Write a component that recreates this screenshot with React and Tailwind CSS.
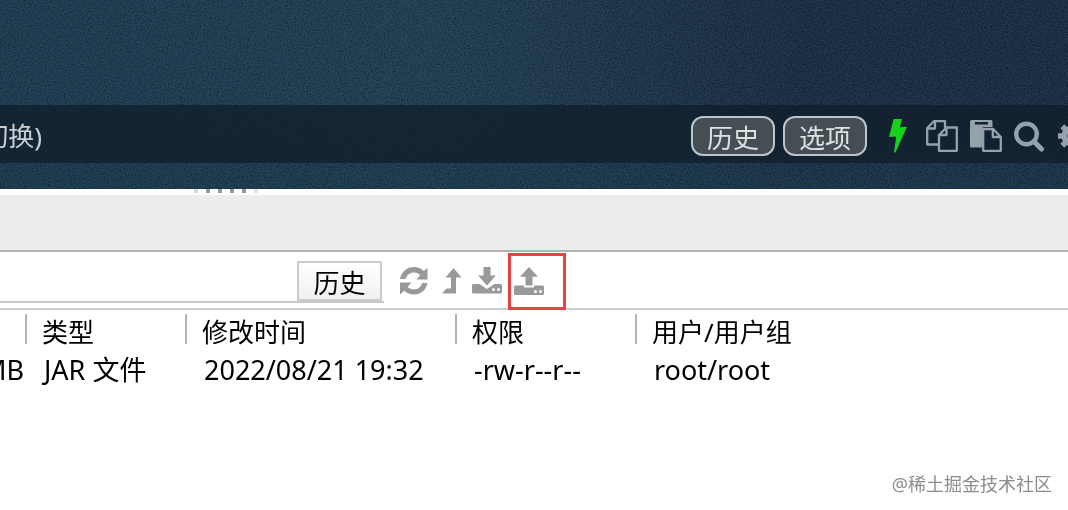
const columns = [
  { name: "类型", width: "w-[160px]" },
  { name: "修改时间", width: "w-[270px]" },
  { name: "权限", width: "w-[180px]" },
  { name: "用户/用户组", width: "" },
];

const files = [
  { size: "MB", type: "JAR 文件", modified: "2022/08/21 19:32", mode: "-rw-r--r--", owner: "root/root" },
];

const BoltIcon = () => (
  <svg width="18" height="34" viewBox="0 0 18 34" fill="#17d21c" aria-hidden="true">
    <path d="M4.700 0h8.300l-2 8.200 7-.4L6.500 33.500H5l2.200-16L0 18z" />
  </svg>
);

const CopyIcon = () => (
  <svg width="32" height="32" viewBox="0 0 32 32" fill="none" stroke="#95a1ab" strokeWidth="2.300" strokeLinejoin="round" aria-hidden="true">
    <path d="M12 24.500H1.200V8l7-7H19v7M9 1v7.500H1" />
    <path d="M20.500 7.500h10.300v23.300H13V15zM20.500 7.500V15H13" />
  </svg>
);

const PasteIcon = () => (
  <svg width="32" height="32" viewBox="0 0 32 32" aria-hidden="true">
    <path fill="#95a1ab" fillRule="evenodd" d="M1.500 0h19.500a1.500 1.500 0 0 1 1.500 1.500V7H14a2 2 0 0 0-2 2v18.500H1.500A1.500 1.500 0 0 1 0 26V1.500A1.500 1.500 0 0 1 1.500 0zM5 2v2.500h13V2z" />
    <path fill="none" stroke="#95a1ab" strokeWidth="2.300" strokeLinejoin="round" d="M13.200 9h10l7.600 8v13.800H13.200zM22.800 9v8h8" />
  </svg>
);

const SearchIcon = () => (
  <svg width="32" height="32" viewBox="0 0 32 32" fill="none" stroke="#95a1ab" strokeLinecap="round" aria-hidden="true">
    <circle cx="12.500" cy="14" r="10.300" strokeWidth="4.400" />
    <path strokeWidth="5" d="M20.500 22l7 7" />
  </svg>
);

const CogIcon = () => (
  <svg width="28" height="28" viewBox="0 0 28 28" aria-hidden="true">
    <circle cx="14" cy="14" r="7.500" fill="none" stroke="#95a1ab" strokeWidth="6" />
    <g stroke="#95a1ab" strokeWidth="5.500">
      <path d="M14 0v5M14 23v5M0 14h5M23 14h5M4.300 4.300l3.500 3.500M20.200 20.200l3.500 3.500M4.300 23.700l3.500-3.500M20.200 7.800l3.500-3.500" />
    </g>
  </svg>
);

const RefreshIcon = () => (
  <svg width="28" height="28" viewBox="0 0 28 28" fill="#999" aria-hidden="true">
    <path d="M0 12C1.500 4.500 7 0 14 0c4 0 7.200 1.400 9.800 4L27.500 1v11.500H16.500L20.300 8C18.500 6.300 16.500 5.500 14 5.500c-4 0-7 2.200-8.500 6.500z" />
    <path d="M27.500 16C26 23.500 20.500 27.500 14 27.500c-4 0-7.200-1.200-9.800-3.700L0 27.500V15.500h11.500L7.500 20c1.800 1.600 4 2.400 6.500 2.400 4 0 7-2.200 8.200-6.400z" />
  </svg>
);

const LevelUpIcon = () => (
  <svg width="20" height="26" viewBox="0 0 20 26" fill="#999" aria-hidden="true">
    <path d="M11.500 0l8 9.500H14V25.500H0L4.500 20.500H9V9.500H3.500z" />
  </svg>
);

const DownloadIcon = () => (
  <svg width="30" height="28" viewBox="0 0 30 28" fill="#999" aria-hidden="true">
    <path d="M1.500 17H7.500l7.500 5 7.500-5h6A1.500 1.500 0 0 1 30 18.500V25a1.500 1.500 0 0 1-1.500 1.500h-27A1.500 1.500 0 0 1 0 25V18.500A1.500 1.500 0 0 1 1.500 17z" />
    <path d="M11.500 -1h7v9.500H24L15 18.500 6 8.500h5.500z" stroke="#fff" strokeWidth="1.500" paintOrder="stroke" />
    <circle cx="21.500" cy="22.500" r="1.500" fill="#fff" />
    <circle cx="26.500" cy="22.500" r="1.500" fill="#fff" />
  </svg>
);

const UploadIcon = () => (
  <svg width="30" height="28" viewBox="0 0 30 28" fill="#999" aria-hidden="true">
    <path d="M1.500 18.500H10v2h10v-2h8.500A1.500 1.500 0 0 1 30 20V26.500a1.500 1.500 0 0 1-1.500 1.500h-27A1.500 1.500 0 0 1 0 26.500V20A1.500 1.500 0 0 1 1.500 18.500z" />
    <path d="M15 0l9 9.800H18.500v8.700h-7V9.800H6z" />
    <circle cx="21.500" cy="24.500" r="1.500" fill="#fff" />
    <circle cx="26.500" cy="24.500" r="1.500" fill="#fff" />
  </svg>
);

function Grain() {
  return (
    <svg className="absolute inset-0 w-full h-full opacity-30 mix-blend-soft-light" aria-hidden="true">
      <filter id="grain">
        <feTurbulence type="fractalNoise" baseFrequency="0.7" numOctaves="2" />
        <feColorMatrix values="1.6 0 0 0 -0.5  1.6 0 0 0 -0.5  1.6 0 0 0 -0.5  0 0 0 0 1" />
      </filter>
      <rect width="100%" height="100%" filter="url(#grain)" />
    </svg>
  );
}

function TerminalPane() {
  const tools = [
    { label: "复制", icon: <CopyIcon /> },
    { label: "粘贴", icon: <PasteIcon /> },
    { label: "查找", icon: <SearchIcon /> },
    { label: "设置", icon: <CogIcon /> },
  ];

  return (
    <section className="relative overflow-hidden pt-[105px] pb-[26px] bg-linear-to-r from-[#1c394d] via-[#203d50] via-40% to-[#1a2c42] to-75%">
      <div className="absolute inset-x-0 bottom-0 h-24 bg-linear-to-b from-[#1a374a]/0 to-[#1a374a]/70" />
      <Grain />
      <div className="relative flex items-center h-[58px] bg-[#101e2a]/75 text-[#c9cfd4]">
        <div className="flex justify-end w-[42px] mt-1 shrink-0 whitespace-nowrap">
          <span>切换)</span>
        </div>
        <div className="flex items-center ml-auto -mr-[22px] mt-1">
          <div className="flex gap-2">
            {["历史", "选项"].map((name) => (
              <button key={name} className="w-[84px] h-10 pt-1 rounded-xl border-2 border-[#bac4ca] bg-[#444e53] leading-8 text-[#dde1e4]">
                {name}
              </button>
            ))}
          </div>
          <button aria-label="快速命令" className="ml-[22px] mr-[19px]">
            <BoltIcon />
          </button>
          <div className="flex gap-3">
            {tools.map((tool) => (
              <button key={tool.label} aria-label={tool.label} className="flex items-center w-8 h-8">
                {tool.icon}
              </button>
            ))}
          </div>
        </div>
      </div>
    </section>
  );
}

function Splitter() {
  return (
    <div className="flex gap-2 h-[6px] pl-[194px] bg-white">
      <i className="w-1 h-1 bg-[#d8d8d8]" />
      <i className="w-1 h-1 bg-[#999]" />
      <i className="w-1 h-1 bg-[#999]" />
      <i className="w-1 h-1 bg-[#999]" />
      <i className="w-1 h-1 bg-[#999]" />
      <i className="w-1 h-1 bg-[#e4e4e4]" />
    </div>
  );
}

function PathBar() {
  return (
    <div className="flex items-start h-[58px] border-b-2 border-[#d0d0d0]">
      <div className="flex items-end w-[384px] h-[51px] border-b-2 border-[#c8c8c8]">
        <input aria-label="路径" className="w-[297px] h-9 px-2 outline-none" />
        <button className="w-[85px] h-10 pt-1 border-2 border-[#ccc] bg-linear-to-b from-white to-[#f0f0f0] leading-8 text-black">
          历史
        </button>
      </div>
      <div className="flex items-center h-[58px] pl-4">
        <button aria-label="刷新" className="mr-[14px]"><RefreshIcon /></button>
        <button aria-label="上级目录" className="mr-[10px]"><LevelUpIcon /></button>
        <button aria-label="下载" className="mr-3"><DownloadIcon /></button>
        <button aria-label="上传" className="relative">
          <UploadIcon />
          <span className="absolute -left-[6px] -top-[14px] w-[58px] h-[57px] border-3 border-[#e84043]" />
        </button>
      </div>
    </div>
  );
}

function FileTable() {
  return (
    <table className="w-full table-fixed border-collapse mt-1 text-left whitespace-nowrap text-black">
      <thead>
        <tr className="h-[34px]">
          <th aria-label="size" className="w-[27px] p-0 align-top">
            <div className="h-[30px] border-r-2 border-[#b4b4b4]" />
          </th>
          {columns.map((col, i) => (
            <th key={col.name} className={`${col.width} p-0 align-top font-normal`}>
              <div className={`h-[30px] pl-[15px] leading-9 ${i < 3 ? "border-r-2 border-[#b4b4b4]" : ""}`}>
                {col.name}
              </div>
            </th>
          ))}
        </tr>
      </thead>
      <tbody className="text-[27px]">
        {files.map((file) => (
          <tr key={file.modified} className="h-11">
            <td className="p-0 pr-[3px]">
              <div className="flex justify-end"><span>{file.size}</span></div>
            </td>
            <td className="p-0 pl-[17px]">{file.type}</td>
            <td className="p-0 pl-[17px]">{file.modified}</td>
            <td className="p-0 pl-[17px]">{file.mode}</td>
            <td className="p-0 pl-[17px]">{file.owner}</td>
          </tr>
        ))}
      </tbody>
    </table>
  );
}

export default function App() {
  return (
    <main className="relative min-h-screen overflow-hidden bg-white font-['Noto_Sans','Noto_Sans_CJK_SC',sans-serif] text-[26px] leading-9">
      <TerminalPane />
      <Splitter />
      <div className="h-[57px] bg-[#ededed] border-b-2 border-[#b3b3b3]" />
      <PathBar />
      <FileTable />
      <p className="absolute right-4 bottom-3 text-lg leading-7 text-[#8c8c8c]">@稀土掘金技术社区</p>
    </main>
  );
}
